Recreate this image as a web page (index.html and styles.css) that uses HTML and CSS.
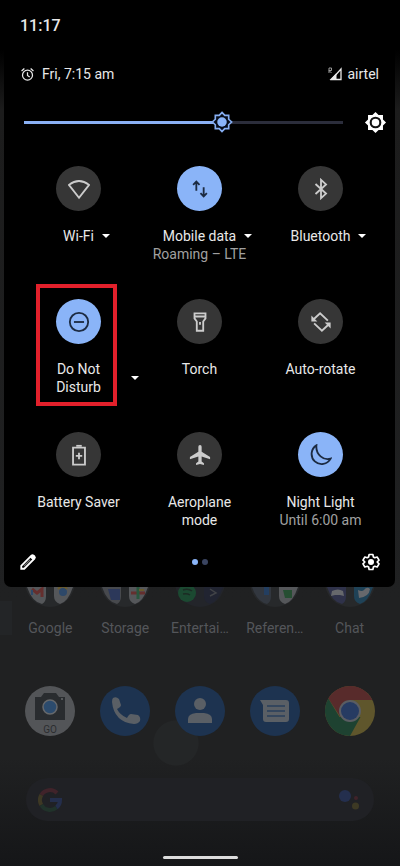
FILE: index.html
```html
<!DOCTYPE html>
<html lang="en">
  <head>
    <meta charset="UTF-8" />
    <meta name="viewport" content="width=device-width, initial-scale=1.0" />
    <title>Quick Settings</title>
    <link rel="stylesheet" href="styles.css">
  </head>
  <body>
    <header class="panel">
      <div class="status-bar"><time>11:17</time></div>

      <div class="info-bar">
        <svg class="icon-alarm" viewBox="0 0 24 24" fill="none" stroke="currentColor" stroke-width="2">
          <circle cx="12" cy="13" r="8" />
          <path d="M12 8.500v5l3.500 2.500M2.500 6.500l4.500-4M21.500 6.500l-4.500-4" />
        </svg>
        <span>Fri, 7:15 am</span>
        <svg class="icon-signal" viewBox="0 0 15 14">
          <path d="M13 2v10.500H3.500z" fill="none" stroke="currentColor" stroke-width="1.300" />
          <path d="M1.500 13L8.500 6v7z" fill="currentColor" />
          <path d="M1 6V1h2.500v2.500H1l2.500 2.500" fill="none" stroke="#999" />
        </svg>
        <span>airtel</span>
      </div>

      <div class="brightness">
        <input class="brightness-slider" type="range" min="0" max="100" value="63" aria-label="Brightness">
        <button class="icon-button" aria-label="Adaptive brightness">
          <svg class="icon-auto" viewBox="0 0 24 24">
            <path d="M12 1l3.200 3.200h4.600v4.600L23 12l-3.200 3.200v4.600h-4.600L12 23l-3.200-3.200H4.200v-4.600L1 12l3.200-3.200V4.200h4.600z" fill="#fff" />
            <circle cx="12" cy="12" r="5" fill="#fff" stroke="#111" stroke-width="2.200" />
          </svg>
        </button>
      </div>

      <div class="tiles">
        <div class="tile">
          <button class="tile-icon" aria-label="Wi-Fi">
            <svg viewBox="0 0 24 24"><path d="M12 21.500L1 7.500Q12-1 23 7.500z" /></svg>
          </button>
          <div class="tile-label"><span>Wi-Fi</span><i class="caret"></i></div>
        </div>
        <div class="tile">
          <button class="tile-icon active" aria-label="Mobile data">
            <svg viewBox="0 0 24 24"><path d="M8 14V4M4.500 7.500L8 4l3.500 3.500M16 10v10M12.500 16.500L16 20l3.500-3.500" /></svg>
          </button>
          <div class="tile-label"><span>Mobile data</span><i class="caret"></i></div>
          <div class="tile-detail">Roaming – LTE</div>
        </div>
        <div class="tile">
          <button class="tile-icon" aria-label="Bluetooth">
            <svg viewBox="0 0 24 24"><path d="M6 6.500L17.500 17 12 22V2l5.500 5L6 17.500" /></svg>
          </button>
          <div class="tile-label"><span>Bluetooth</span><i class="caret"></i></div>
        </div>

        <div class="tile highlighted">
          <button class="tile-icon active" aria-label="Do Not Disturb">
            <svg viewBox="0 0 24 24"><circle cx="12" cy="12" r="10" /><path d="M6.500 12h11" /></svg>
          </button>
          <div class="tile-label"><span>Do Not Disturb</span><i class="caret"></i></div>
        </div>
        <div class="tile">
          <button class="tile-icon" aria-label="Torch">
            <svg viewBox="0 0 24 24"><path d="M6 2.500h12V8l-2.500 3.500v10h-7v-10L6 8zM6 6h12M12 12v3" /></svg>
          </button>
          <div class="tile-label"><span>Torch</span></div>
        </div>
        <div class="tile">
          <button class="tile-icon" aria-label="Auto-rotate">
            <svg viewBox="0 0 24 24"><path d="M19.500 10.500L11 2.500 4 9M4.500 13.500l8.500 8 7-6.500" /><path class="solid" d="M1.500 5v6.500H8zM22.500 19v-6.500H16z" /></svg>
          </button>
          <div class="tile-label"><span>Auto-rotate</span></div>
        </div>

        <div class="tile">
          <button class="tile-icon" aria-label="Battery Saver">
            <svg viewBox="0 0 24 24"><path d="M5.500 4h13v18.500h-13zM12 9.500v7M8.500 13h7" /><path class="solid" d="M9 1h6v2H9z" /></svg>
          </button>
          <div class="tile-label"><span>Battery Saver</span></div>
        </div>
        <div class="tile">
          <button class="tile-icon" aria-label="Aeroplane mode">
            <svg viewBox="0 0 24 24"><path class="filled" d="M23 16.500v-2.200l-9.200-5.800V3a1.800 1.800 0 0 0-3.600 0v5.500L1 14.300v2.200l9.200-2.900v5.600l-2.500 1.900v1.800L12 21.700l4.300 1.200v-1.800l-2.500-1.900v-5.600z" /></svg>
          </button>
          <div class="tile-label"><span>Aeroplane mode</span></div>
        </div>
        <div class="tile">
          <button class="tile-icon active" aria-label="Night Light">
            <svg viewBox="0 0 24 24"><path d="M7 1.500A11 11 0 1 0 22.500 16C15 18.500 6 11.500 7 1.500z" /></svg>
          </button>
          <div class="tile-label"><span>Night Light</span></div>
          <div class="tile-detail">Until 6:00 am</div>
        </div>
      </div>

      <div class="panel-footer">
        <button class="icon-button" aria-label="Edit">
          <svg class="icon-small" viewBox="0 0 24 24">
            <path d="M3 21v-4L16.500 3.500q1.500-1.200 3 0l1 1q1.200 1.500 0 3L7 21z" fill="none" stroke="#fff" stroke-width="2.400" />
            <path d="M14.500 5.500l2.500-2.500q2-1 4 1t0 4l-2 2z" fill="#fff" />
            <path d="M6.500 17.500L15 9" stroke="#777" stroke-width="1.500" />
          </svg>
        </button>
        <div class="pages"><i class="page-dot current"></i><i class="page-dot"></i></div>
        <button class="icon-button" aria-label="Settings">
          <svg class="icon-small" viewBox="0 0 24 24">
            <path d="M9.500 2h5l.7 3.300 1.800 1 3.200-1 2.500 4.200-2.500 2.500 2.500 2.500-2.500 4.200-3.200-1-1.800 1-.7 3.300h-5l-.7-3.300-1.800-1-3.200 1-2.500-4.200L3.800 12 1.300 9.500l2.500-4.200 3.200 1 1.800-1z" fill="none" stroke="#fff" stroke-width="2.200" stroke-linejoin="round" />
            <circle cx="12" cy="12" r="4" fill="#fff" />
          </svg>
        </button>
      </div>
    </header>

    <main class="home">
      <div class="folders">
        <a class="folder" href="#">
          <svg viewBox="0 30 50 20">
            <circle cx="25" cy="25" r="25" fill="#27292b" />
            <path d="M2 30h19v9q0 6-4 8Q7 45 2 30z" fill="#55575a" />
            <path d="M29 30h19q-5 15-13 17-6-2-6-8z" fill="#55575a" />
            <path d="M7 32l5 4 5-4v8" fill="none" stroke="#652f2e" stroke-width="3" />
            <path d="M7 33v5" stroke="#2d4869" stroke-width="2" />
            <circle cx="38" cy="35" r="4" fill="#2d4869" />
            <path d="M33 32q5-5 9 0" fill="none" stroke="#6a5b2d" stroke-width="2" />
          </svg>
          <span>Google</span>
        </a>
        <a class="folder" href="#">
          <svg viewBox="0 30 50 20">
            <circle cx="25" cy="25" r="25" fill="#27292b" />
            <path d="M2 30h19v9q0 6-4 8Q7 45 2 30z" fill="#47494d" />
            <path d="M29 30h19q-5 15-13 17-6-2-6-8z" fill="#55575a" />
            <path d="M8 32h12v11h-9z" fill="#2c385a" />
            <path d="M31 36h14" stroke="#652f2e" stroke-width="3" />
            <path d="M38 30v12" stroke="#28563d" stroke-width="3" />
            <path d="M39 33h5" stroke="#6a5b2d" stroke-width="2" />
          </svg>
          <span>Storage</span>
        </a>
        <a class="folder" href="#">
          <svg viewBox="0 30 50 20">
            <circle cx="25" cy="25" r="25" fill="#23252a" />
            <circle cx="12" cy="36" r="9" fill="#1b4931" />
            <path d="M8 33q5-2 9 1M8 37q4-1 7 1" fill="none" stroke="#1c2b24" stroke-width="1.500" />
            <path d="M29 30h19q-5 15-13 17-6-2-6-8z" fill="#212431" />
            <path d="M35 32l6 4-6 3" fill="none" stroke="#414347" stroke-width="1.500" />
          </svg>
          <span>Entertai…</span>
        </a>
        <a class="folder" href="#">
          <svg viewBox="0 30 50 20">
            <circle cx="25" cy="25" r="25" fill="#27292b" />
            <path d="M2 30h19v9q0 6-4 8Q7 45 2 30z" fill="#32373f" />
            <path d="M29 30h19q-5 15-13 17-6-2-6-8z" fill="#55575a" />
            <path d="M14 30h5v8h-5z" fill="#233e60" />
            <path d="M33 33h9v8h-7z" fill="#264e32" />
          </svg>
          <span>Referen…</span>
        </a>
        <a class="folder" href="#">
          <svg viewBox="0 30 50 20">
            <circle cx="25" cy="25" r="25" fill="#27292b" />
            <path d="M2 30h19v9q0 6-4 8Q7 45 2 30z" fill="#2f324a" />
            <path d="M29 30h19q-5 15-13 17-6-2-6-8z" fill="#1f4257" />
            <path d="M7 34q6-3 11 0l1 5-4-1H10l-4 1z" fill="#66686c" />
            <path d="M33 33q4 2 6 0 3-4 6-1-1 8-11 9z" fill="#66686c" />
          </svg>
          <span>Chat</span>
        </a>
      </div>

      <nav class="dock">
        <a href="#" aria-label="Camera Go">
          <svg viewBox="0 0 50 50">
            <circle cx="25" cy="25" r="25" fill="#535558" />
            <path d="M10 11h6l3-4h12l3 4h6v23H10z" fill="#292c2f" />
            <circle cx="25" cy="21" r="7" fill="#2c4b6d" stroke="#66686b" stroke-width="1.500" />
            <circle cx="37" cy="13" r="1" fill="#66686b" />
            <text class="go-text" x="25" y="47" text-anchor="middle">GO</text>
          </svg>
        </a>
        <a href="#" aria-label="Phone">
          <svg viewBox="0 0 50 50">
            <circle cx="25" cy="25" r="25" fill="#1d3350" />
            <path d="M13 12q3-2 6 1l2 6q0 2-4 4 3 6 10 9 2-4 4-4l7 1q3 2 2 6-2 3-6 3Q14 36 12 16q0-3 1-4z" fill="#5a5f65" />
          </svg>
        </a>
        <a href="#" aria-label="Contacts">
          <svg viewBox="0 0 50 50">
            <circle cx="25" cy="25" r="25" fill="#1d3350" />
            <circle cx="25" cy="18" r="6" fill="#5a5f65" />
            <path d="M13 37v-4q0-5 8-6h8q8 1 8 6v4z" fill="#5a5f65" />
          </svg>
        </a>
        <a href="#" aria-label="Messages">
          <svg viewBox="0 0 50 50">
            <circle cx="25" cy="25" r="25" fill="#1d3350" />
            <path d="M10 14h26q3 0 3 3v16q0 3-3 3H16q-3 0-3-3V19z" fill="#5a5f65" />
            <path d="M17 20h18M17 25h18M17 30h18" stroke="#34465d" stroke-width="2" />
          </svg>
        </a>
        <a href="#" aria-label="Chrome">
          <svg viewBox="0 0 50 50">
            <circle cx="25" cy="25" r="25" fill="#5f562c" />
            <path d="M25 14H47.300A25 25 0 0 0 3.300 12.500L15.500 31z" fill="#582b2b" />
            <path d="M3.300 12.500A25 25 0 0 0 25 50L35.500 31 14.500 31z" fill="#1e4231" />
            <circle cx="25" cy="25" r="11" fill="#5a5d62" />
            <circle cx="25" cy="25" r="9" fill="#263b62" />
          </svg>
        </a>
      </nav>

      <form class="search">
        <svg viewBox="0 0 24 24" fill="none" stroke-width="4">
          <path d="M3.300 7A10 10 0 0 1 19 5" stroke="#40232a" />
          <path d="M3.300 17A10 10 0 0 1 3.300 7" stroke="#3d3824" />
          <path d="M18.500 19.500A10 10 0 0 1 3.300 17" stroke="#20322a" />
          <path d="M12 12h10q0 5-3.500 7.500" stroke="#242e4c" />
        </svg>
        <input type="text" aria-label="Search">
        <button class="icon-button" type="button" aria-label="Assistant">
          <svg viewBox="0 0 24 24">
            <circle cx="7" cy="8" r="6" fill="#242f4e" />
            <circle cx="18" cy="10" r="2" fill="#40232a" />
            <circle cx="17.500" cy="18" r="3.500" fill="#3d3924" />
          </svg>
        </button>
      </form>

      <div class="home-indicator"></div>
    </main>
  </body>
</html>
```

FILE: styles.css
```css
*,
*::after {
  box-sizing: border-box;
}
body {
  display: flex;
  flex-direction: column;
  margin: 0;
  min-height: 100vh;
  background: linear-gradient(#000 50px, #1c1c1c 110px, #202122 600px);
  font-family: Roboto, "Noto Sans", sans-serif;
  font-size: 14px;
  line-height: 18px;
  color: #e8e8e8;
}
button {
  padding: 0;
  border: 0;
  background: none;
  color: inherit;
}
svg {
  display: block;
}
a {
  color: inherit;
  text-decoration: none;
}
.panel {
  margin: 0 5px 0 4px;
  background: #000;
  border-radius: 0 0 7px 7px;
}
.status-bar {
  display: flex;
  align-items: center;
  height: 52px;
  padding: 0 16px;
  font-size: 16px;
  font-weight: 500;
}
.info-bar {
  display: flex;
  align-items: center;
  height: 44px;
  padding: 0 16px;
}
.icon-alarm {
  width: 15px;
  height: 15px;
  margin-right: 7px;
}
.icon-signal {
  width: 15px;
  height: 14px;
  margin: 0 4px 0 auto;
}
.brightness {
  display: flex;
  align-items: center;
  gap: 21px;
  height: 52px;
  padding: 0 8px 0 20px;
}
.brightness-slider {
  flex: 1;
  min-width: 0;
  height: 24px;
  margin: 0;
  appearance: none;
  background: linear-gradient(90deg, #8ab0f4 62%, #2b2d3b 62%) center / 100% 3px no-repeat;
}
.brightness-slider::-webkit-slider-thumb {
  appearance: none;
  width: 22px;
  height: 22px;
  background: url("data:image/svg+xml,%3Csvg xmlns='http://www.w3.org/2000/svg' viewBox='0 0 24 24'%3E%3Cpath d='M12 1.500l3 3.200h4.300V9l3.200 3-3.200 3v4.300H15l-3 3.200-3-3.200H4.700V15l-3.200-3 3.200-3V4.700H9z' fill='%23060c18' stroke='%2386aef2' stroke-width='1.800'/%3E%3Ccircle cx='12' cy='12' r='5.200' fill='%238ab4f8'/%3E%3C/svg%3E");
}
.icon-auto {
  width: 23px;
  height: 23px;
}
.tiles {
  display: grid;
  grid-template-columns: repeat(3, 1fr);
  row-gap: 36px;
  padding: 18px 14px 0;
}
.tile {
  position: relative;
  display: flex;
  flex-direction: column;
  align-items: center;
  text-align: center;
}
.tile-icon {
  display: flex;
  align-items: center;
  justify-content: center;
  width: 45px;
  height: 45px;
  margin-bottom: 16px;
  border-radius: 50%;
  background: #363636;
  color: #ccc;
}
.tile-icon svg {
  width: 22px;
  height: 22px;
  fill: none;
  stroke: currentColor;
  stroke-width: 2;
}
.tile-icon .solid,
.tile-icon .filled {
  fill: currentColor;
  stroke: none;
}
.tile-icon.active {
  background: #8ab4f8;
  color: #1c2b42;
}
.tile-label {
  display: grid;
  grid-template-columns: 16px auto 16px;
  align-items: center;
}
.tile-label span {
  grid-column: 2;
  max-width: 88px;
}
.caret {
  justify-self: end;
  border: 4px solid transparent;
  border-top-color: #fff;
  border-bottom: 0;
}
.tile-detail {
  color: #a0a0a0;
}
/* red frame around the tile being pointed at */
.highlighted::after {
  content: "";
  position: absolute;
  top: -15px;
  left: 18px;
  width: 81px;
  height: 122px;
  border: 4px solid #e2202b;
}
.panel-footer {
  display: flex;
  align-items: center;
  justify-content: space-between;
  height: 50px;
  margin-top: 8px;
  padding: 0 15px;
}
.icon-small {
  width: 18px;
  height: 18px;
}
.pages {
  display: flex;
  gap: 4px;
}
.page-dot {
  width: 6px;
  height: 6px;
  border-radius: 50%;
  background: #3a4460;
}
.page-dot.current {
  background: #8ab4f8;
}
.home {
  flex: 1;
  padding: 0 13px 6px;
  background:
    radial-gradient(circle at 176px 156px, #242627 22px, transparent 23px),
    linear-gradient(#232527, #232527) 0 14px / 12px 34px no-repeat,
    linear-gradient(transparent 170px, #151618);
}
.folders,
.dock {
  display: grid;
  grid-template-columns: repeat(5, 1fr);
  justify-items: center;
}
.folder svg {
  width: 50px;
  height: 20px;
  margin: 0 auto 12px;
}
.folder {
  color: #54565a;
  text-align: center;
}
.dock {
  margin-top: 49px;
}
.dock svg {
  width: 50px;
  height: 50px;
}
.go-text {
  font-size: 10px;
  fill: #2b2d30;
}
.search {
  display: flex;
  align-items: center;
  height: 43px;
  margin: 42px 13px 35px;
  padding: 0 12px;
  border-radius: 22px;
  background: #202125;
}
.search svg {
  width: 24px;
  height: 24px;
}
.search input {
  flex: 1;
  min-width: 0;
  border: 0;
  outline: 0;
  background: none;
  color: #54565a;
}
.home-indicator {
  width: 75px;
  height: 3px;
  margin: 0 auto;
  border-radius: 2px;
  background: #dcdcdc;
}
```
